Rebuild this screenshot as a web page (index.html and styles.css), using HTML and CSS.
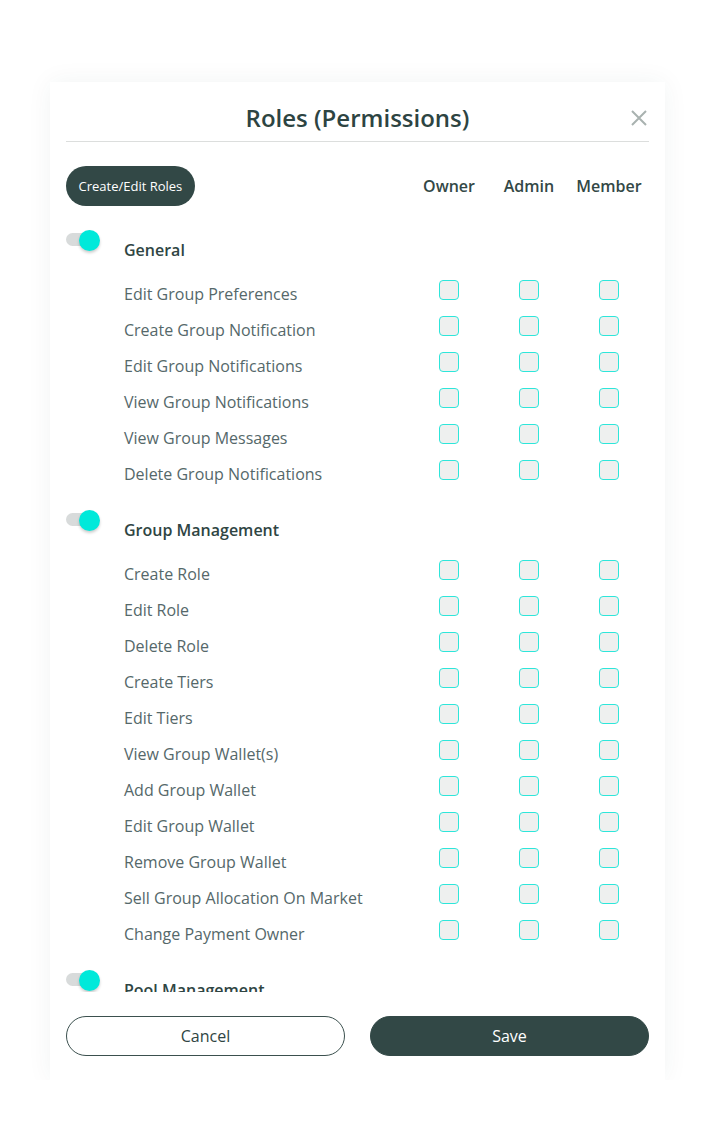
FILE: index.html
```html
<!DOCTYPE html>
<html lang="en">
<head>
<meta charset="utf-8">
<title>Roles (Permissions)</title>
<link rel="stylesheet" href="styles.css">
</head>
<body>
<div class="modal">
  <div class="modal-head">
    <h1 class="title">Roles (Permissions)</h1>
    <button class="close" aria-label="Close">
      <svg width="16" height="16" viewBox="0 0 16 16"><path d="M1 1L15 15M15 1L1 15" stroke="#a9b2b0" stroke-width="2" fill="none"/></svg>
    </button>
  </div>
  <div class="divider"></div>
  <div class="body">
    <div class="grid header-row">
      <div><button class="pill">Create/Edit Roles</button></div>
      <div class="col-label">Owner</div>
      <div class="col-label">Admin</div>
      <div class="col-label">Member</div>
    </div>

    <div class="section section-first">
      <div class="section-head">
        <span class="toggle"><span class="knob"></span></span>
        <span class="section-title">General</span>
      </div>
      <div class="grid item"><span class="label">Edit Group Preferences</span><span class="cb"></span><span class="cb"></span><span class="cb"></span></div>
      <div class="grid item"><span class="label">Create Group Notification</span><span class="cb"></span><span class="cb"></span><span class="cb"></span></div>
      <div class="grid item"><span class="label">Edit Group Notifications</span><span class="cb"></span><span class="cb"></span><span class="cb"></span></div>
      <div class="grid item"><span class="label">View Group Notifications</span><span class="cb"></span><span class="cb"></span><span class="cb"></span></div>
      <div class="grid item"><span class="label">View Group Messages</span><span class="cb"></span><span class="cb"></span><span class="cb"></span></div>
      <div class="grid item"><span class="label">Delete Group Notifications</span><span class="cb"></span><span class="cb"></span><span class="cb"></span></div>
    </div>

    <div class="section">
      <div class="section-head">
        <span class="toggle"><span class="knob"></span></span>
        <span class="section-title">Group Management</span>
      </div>
      <div class="grid item"><span class="label">Create Role</span><span class="cb"></span><span class="cb"></span><span class="cb"></span></div>
      <div class="grid item"><span class="label">Edit Role</span><span class="cb"></span><span class="cb"></span><span class="cb"></span></div>
      <div class="grid item"><span class="label">Delete Role</span><span class="cb"></span><span class="cb"></span><span class="cb"></span></div>
      <div class="grid item"><span class="label">Create Tiers</span><span class="cb"></span><span class="cb"></span><span class="cb"></span></div>
      <div class="grid item"><span class="label">Edit Tiers</span><span class="cb"></span><span class="cb"></span><span class="cb"></span></div>
      <div class="grid item"><span class="label">View Group Wallet(s)</span><span class="cb"></span><span class="cb"></span><span class="cb"></span></div>
      <div class="grid item"><span class="label">Add Group Wallet</span><span class="cb"></span><span class="cb"></span><span class="cb"></span></div>
      <div class="grid item"><span class="label">Edit Group Wallet</span><span class="cb"></span><span class="cb"></span><span class="cb"></span></div>
      <div class="grid item"><span class="label">Remove Group Wallet</span><span class="cb"></span><span class="cb"></span><span class="cb"></span></div>
      <div class="grid item"><span class="label">Sell Group Allocation On Market</span><span class="cb"></span><span class="cb"></span><span class="cb"></span></div>
      <div class="grid item"><span class="label">Change Payment Owner</span><span class="cb"></span><span class="cb"></span><span class="cb"></span></div>
    </div>

    <div class="section">
      <div class="section-head">
        <span class="toggle"><span class="knob"></span></span>
        <span class="section-title">Pool Management</span>
      </div>
    </div>
  </div>
  <div class="footer">
    <button class="btn btn-outline">Cancel</button>
    <button class="btn btn-solid">Save</button>
  </div>
</div>
</body>
</html>
```

FILE: styles.css
```css
* { box-sizing: border-box; }
html, body { margin: 0; padding: 0; background: #ffffff; }
body {
  font-family: "Open Sans", "Noto Sans", sans-serif;
  color: #2f4543;
}
.modal {
  width: 615px;
  height: 998px;
  margin: 82px 0 0 50px;
  background: #ffffff;
  box-shadow: 0 0 24px rgba(40, 70, 60, 0.06);
  padding: 20px 16px 24px;
  display: flex;
  flex-direction: column;
}
.modal-head {
  position: relative;
  height: 32px;
  margin-bottom: 7px;
}
.title {
  margin: 0;
  font-size: 24px;
  line-height: 32px;
  font-weight: 600;
  text-align: center;
  color: #2d4442;
}
.close {
  position: absolute;
  right: 2px;
  top: 8px;
  width: 16px;
  height: 16px;
  padding: 0;
  border: 0;
  background: none;
  display: block;
}
.close svg { display: block; }
.divider { height: 1px; background: #dcdedd; }
.body {
  flex: 1;
  overflow: hidden;
  padding-top: 24px;
}
.grid {
  display: grid;
  grid-template-columns: 1fr 80px 80px 80px;
}
.header-row {
  height: 40px;
  align-items: center;
}
.pill {
  height: 40px;
  padding: 0 12.5px;
  border: 0;
  border-radius: 20px;
  background: #324846;
  color: #ffffff;
  font-family: "Open Sans", "Noto Sans", sans-serif;
  font-size: 13px;
  cursor: pointer;
}
.col-label {
  text-align: center;
  font-size: 16px;
  font-weight: 600;
  color: #334846;
}
.section { margin-top: 26px; }
.section-first { margin-top: 32px; }
.section-head {
  display: flex;
  align-items: flex-start;
  height: 24px;
  margin-bottom: 14px;
}
.toggle {
  position: relative;
  width: 58px;
  height: 24px;
  flex: none;
}
.toggle::before {
  content: "";
  position: absolute;
  left: 0;
  top: -5px;
  width: 32px;
  height: 13px;
  border-radius: 7px;
  background: #d8dbdb;
}
.knob {
  position: absolute;
  left: 13px;
  top: -8px;
  width: 21px;
  height: 21px;
  border-radius: 50%;
  background: #00e9da;
  box-shadow: 0 2px 3px rgba(0, 0, 0, 0.2);
}
.section-title {
  font-size: 16px;
  line-height: 24px;
  font-weight: 600;
  color: #2f4543;
}
.item {
  height: 36px;
  align-items: start;
}
.label {
  padding-left: 58px;
  margin-top: 6px;
  font-size: 16px;
  line-height: 24px;
  color: #55686a;
  white-space: nowrap;
}
.cb {
  justify-self: center;
  margin-top: 4px;
  width: 20px;
  height: 20px;
  border: 1px solid #2de6da;
  border-radius: 4px;
  background: #eef0ef;
}
.footer {
  display: flex;
  gap: 25px;
  margin-top: 24px;
}
.btn {
  flex: 1;
  height: 40px;
  border-radius: 20px;
  font-family: "Open Sans", "Noto Sans", sans-serif;
  font-size: 16px;
  cursor: pointer;
}
.btn-outline {
  background: #ffffff;
  border: 1px solid #3b504e;
  color: #2f4543;
}
.btn-solid {
  background: #324846;
  border: 1px solid #324846;
  color: #ffffff;
}
```
